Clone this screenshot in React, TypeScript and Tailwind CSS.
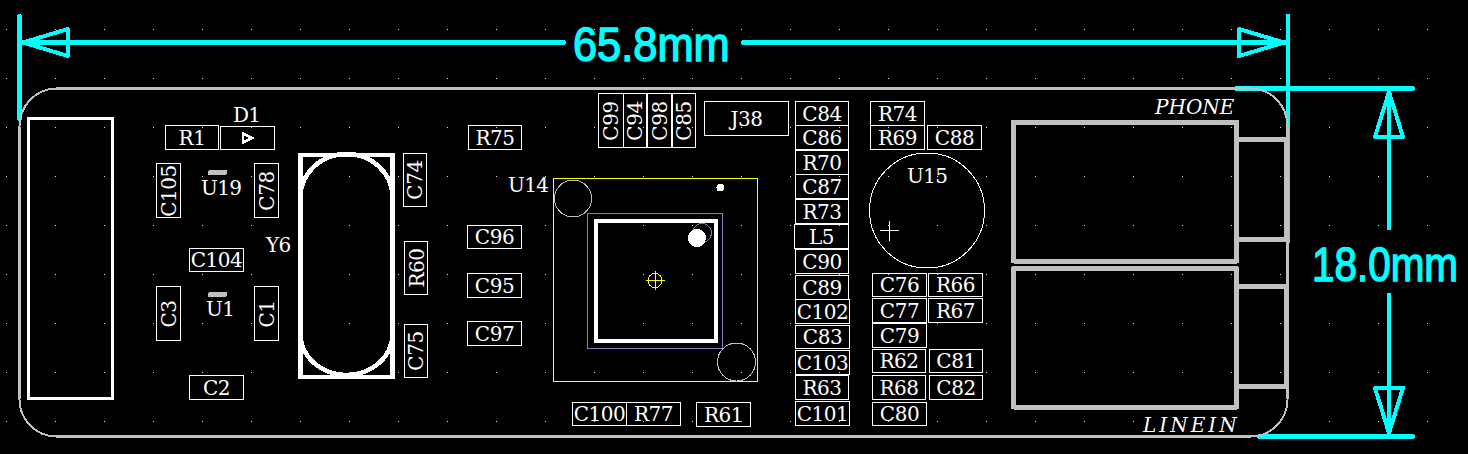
const CYAN = "#00ffff";
const GRAY = "#c0c0c0";

// text, left, top, right, bottom, vertical
const parts: [string, number, number, number, number, boolean?][] = [
  ["R1", 165, 125, 219, 150],
  ["C105", 156, 163, 181, 218, true],
  ["C78", 254, 163, 279, 218, true],
  ["C74", 403, 153, 427, 207, true],
  ["R75", 468, 125, 522, 150],
  ["C104", 189, 248, 244, 272],
  ["C3", 156, 286, 181, 341, true],
  ["C1", 254, 286, 279, 341, true],
  ["C2", 189, 375, 244, 400],
  ["R60", 404, 241, 428, 295, true],
  ["C75", 404, 324, 428, 378, true],
  ["C96", 467, 225, 522, 249],
  ["C95", 467, 273, 522, 298],
  ["C97", 467, 321, 522, 346],
  ["C99", 598, 93, 624, 148, true],
  ["C94", 623, 93, 647, 148, true],
  ["C98", 647, 93, 672, 148, true],
  ["C85", 672, 93, 696, 148, true],
  ["J38", 704, 101, 789, 136],
  ["C84", 795, 101, 849, 126],
  ["C86", 795, 125, 849, 150],
  ["R70", 795, 150, 849, 175],
  ["C87", 795, 174, 849, 199],
  ["R73", 795, 199, 849, 224],
  ["L5", 794, 224, 849, 249],
  ["C90", 795, 249, 849, 274],
  ["C89", 795, 275, 849, 300],
  ["C102", 795, 299, 850, 324],
  ["C83", 795, 325, 850, 349],
  ["C103", 795, 350, 850, 375],
  ["R63", 795, 375, 849, 400],
  ["C101", 795, 401, 850, 426],
  ["R74", 870, 101, 925, 126],
  ["R69", 870, 125, 925, 150],
  ["C88", 927, 125, 982, 150],
  ["C76", 872, 273, 927, 297],
  ["C77", 872, 298, 927, 323],
  ["C79", 872, 323, 927, 348],
  ["R62", 872, 349, 926, 373],
  ["R68", 872, 375, 926, 400],
  ["C80", 872, 402, 927, 426],
  ["R66", 928, 273, 983, 297],
  ["R67", 928, 298, 983, 323],
  ["C81", 929, 349, 983, 373],
  ["C82", 929, 375, 983, 400],
  ["C100", 572, 402, 627, 426],
  ["R77", 626, 402, 681, 426],
  ["R61", 696, 402, 751, 427],
  ["", 220, 126, 275, 150],
];

// refs that sit free on the board: text, left, top
const refs: [string, number, number][] = [
  ["D1", 233, 105],
  ["U19", 201, 178],
  ["U1", 206, 299],
  ["Y6", 266, 235],
  ["U14", 508, 175],
  ["U15", 907, 166],
];

function Arrow({ points }: { points: string }) {
  return <polygon points={points} fill="none" stroke={CYAN} strokeWidth={4} strokeLinejoin="round" />;
}

function Jack({ top, bottom, tabTop, tabBottom }: { top: number; bottom: number; tabTop: number; tabBottom: number }) {
  return (
    <g fill="none" stroke={GRAY} strokeWidth={5} strokeLinejoin="round">
      <rect x={1013.5} y={top} width={223} height={bottom - top} />
      <polyline points={`1237,${tabTop} 1286,${tabTop} 1286,${tabBottom} 1237,${tabBottom}`} />
    </g>
  );
}

function Drawing() {
  const dots = [];
  for (let r = 0; r < 9; r++) {
    for (let c = 0; c < 30; c++) {
      dots.push(<rect key={`${r}-${c}`} x={6 + 49 * c} y={29 + 49 * r} width={1} height={1} fill="#e0e0e0" />);
    }
  }
  return (
    <svg width={1468} height={454} className="absolute inset-0" shapeRendering="crispEdges">
      {dots}

      {/* dimensions */}
      <g stroke={CYAN} strokeWidth={4.5} strokeLinecap="round">
        <line x1={19.5} y1={16} x2={19.5} y2={119} />
        <line x1={1288} y1={16} x2={1288} y2={241} />
        <line x1={20} y1={42.5} x2={564} y2={42.5} />
        <line x1={743} y1={42.5} x2={1286} y2={42.5} />
        <line x1={1236} y1={88.5} x2={1413} y2={88.5} />
        <line x1={1259} y1={436.5} x2={1413} y2={436.5} />
        <line x1={1389} y1={90} x2={1389} y2={228} />
        <line x1={1389} y1={295} x2={1389} y2={435} />
      </g>
      <Arrow points="23,42.5 68,29 68,56" />
      <Arrow points="1284,42.5 1239,29 1239,56" />
      <Arrow points="1389,92 1375,137 1403,137" />
      <Arrow points="1389,433 1375,388 1403,388" />

      {/* board outline */}
      <g fill="none" stroke={GRAY}>
        <path d="M56 88.5H1251M56 436.5H1251M19.5 127V399M1287.5 125V399" strokeWidth={3} />
        <path d="M56 88.5A37 38 0 0 0 19.5 127M19.5 399A37 37 0 0 0 56 436.5M1251 88.5A37 38 0 0 1 1287.5 125M1287.5 399A37 37 0 0 1 1251 436.5" strokeWidth={2} />
      </g>

      <Jack top={122} bottom={261} tabTop={139} tabBottom={239} />
      <Jack top={268.5} bottom={407} tabTop={286} tabBottom={386} />

      {/* connector and crystal */}
      <rect x={28.5} y={118.5} width={84} height={280} fill="none" stroke="white" strokeWidth={3} />
      <g fill="none" stroke="white" strokeWidth={4.5}>
        <rect x={300.5} y={155} width={92} height={222} />
        <path d="M300.5 197A46 43 0 0 1 392.5 197M300.5 334A46 41 0 0 0 392.5 334" />
      </g>

      {/* U19, U1 pin marks */}
      <rect x={208} y={170} width={19} height={5} rx={2} fill={GRAY} />
      <rect x={208} y={292} width={19} height={5} rx={2} fill={GRAY} />

      {/* U14 */}
      <rect x={553.5} y={178.5} width={204} height={203} fill="none" stroke="#ffff00" strokeWidth={1.5} />
      <rect x={587.5} y={213.5} width={135} height={135} fill="none" stroke="#8080c0" strokeWidth={1.5} />
      <rect x={595.5} y={220.5} width={120} height={120} fill="none" stroke="white" strokeWidth={4} />
      <circle cx={702} cy={233} r={9.5} fill="none" stroke="#8080c0" />
      <circle cx={697} cy={238} r={9} fill="white" />
      <circle cx={720.5} cy={187.5} r={4} fill="white" />
      <circle cx={573} cy={198.5} r={18.5} fill="none" stroke={GRAY} />
      <circle cx={736.5} cy={362} r={19} fill="none" stroke={GRAY} />
      <g fill="none" stroke="#ffff00">
        <circle cx={655} cy={280.5} r={7} />
        <path d="M645.5 280.5H664.5M655.5 271V290" />
      </g>

      {/* U15 */}
      <circle cx={927} cy={210.5} r={57.5} fill="none" stroke="white" />
      <path d="M880 230.5H899M889.5 221V241" stroke="white" fill="none" />

      {/* D1 mark */}
      <polygon points="243,133.5 252,138 243,142.5" fill="none" stroke="white" strokeWidth={2.5} />
    </svg>
  );
}

export default function App() {
  return (
    <div className="relative h-[454px] w-[1468px] overflow-hidden bg-black font-['DejaVu_Serif',serif] text-[20px] leading-none text-white">
      <Drawing />

      {parts.map(([text, x0, y0, x1, y1, vertical]) => (
        <div
          key={`${text}-${x0}`}
          className="absolute flex items-center justify-center whitespace-nowrap border border-white tracking-[-0.5px]"
          style={{ left: x0, top: y0, width: x1 - x0, height: y1 - y0 }}
        >
          <span className={vertical ? "inline-block -rotate-90" : "inline-block"}>{text}</span>
        </div>
      ))}

      {refs.map(([text, x, y]) => (
        <div key={text} className="absolute whitespace-nowrap tracking-[-0.7px]" style={{ left: x, top: y }}>
          {text}
        </div>
      ))}

      <div className="absolute left-[1155px] top-[97px] whitespace-nowrap italic">PHONE</div>
      <div className="absolute left-[1143px] top-[415px] whitespace-nowrap italic tracking-[3px]">LINEIN</div>

      <div className="absolute left-[573px] top-[20px] origin-left scale-x-[0.885] font-['Liberation_Sans',sans-serif] text-[49px] text-[#00ffff] [-webkit-text-stroke:1.5px_#00ffff]">
        65.8mm
      </div>
      <div className="absolute left-[1312px] top-[240px] origin-left scale-x-[0.825] font-['Liberation_Sans',sans-serif] text-[49px] text-[#00ffff] [-webkit-text-stroke:1.5px_#00ffff]">
        18.0mm
      </div>
    </div>
  );
}
